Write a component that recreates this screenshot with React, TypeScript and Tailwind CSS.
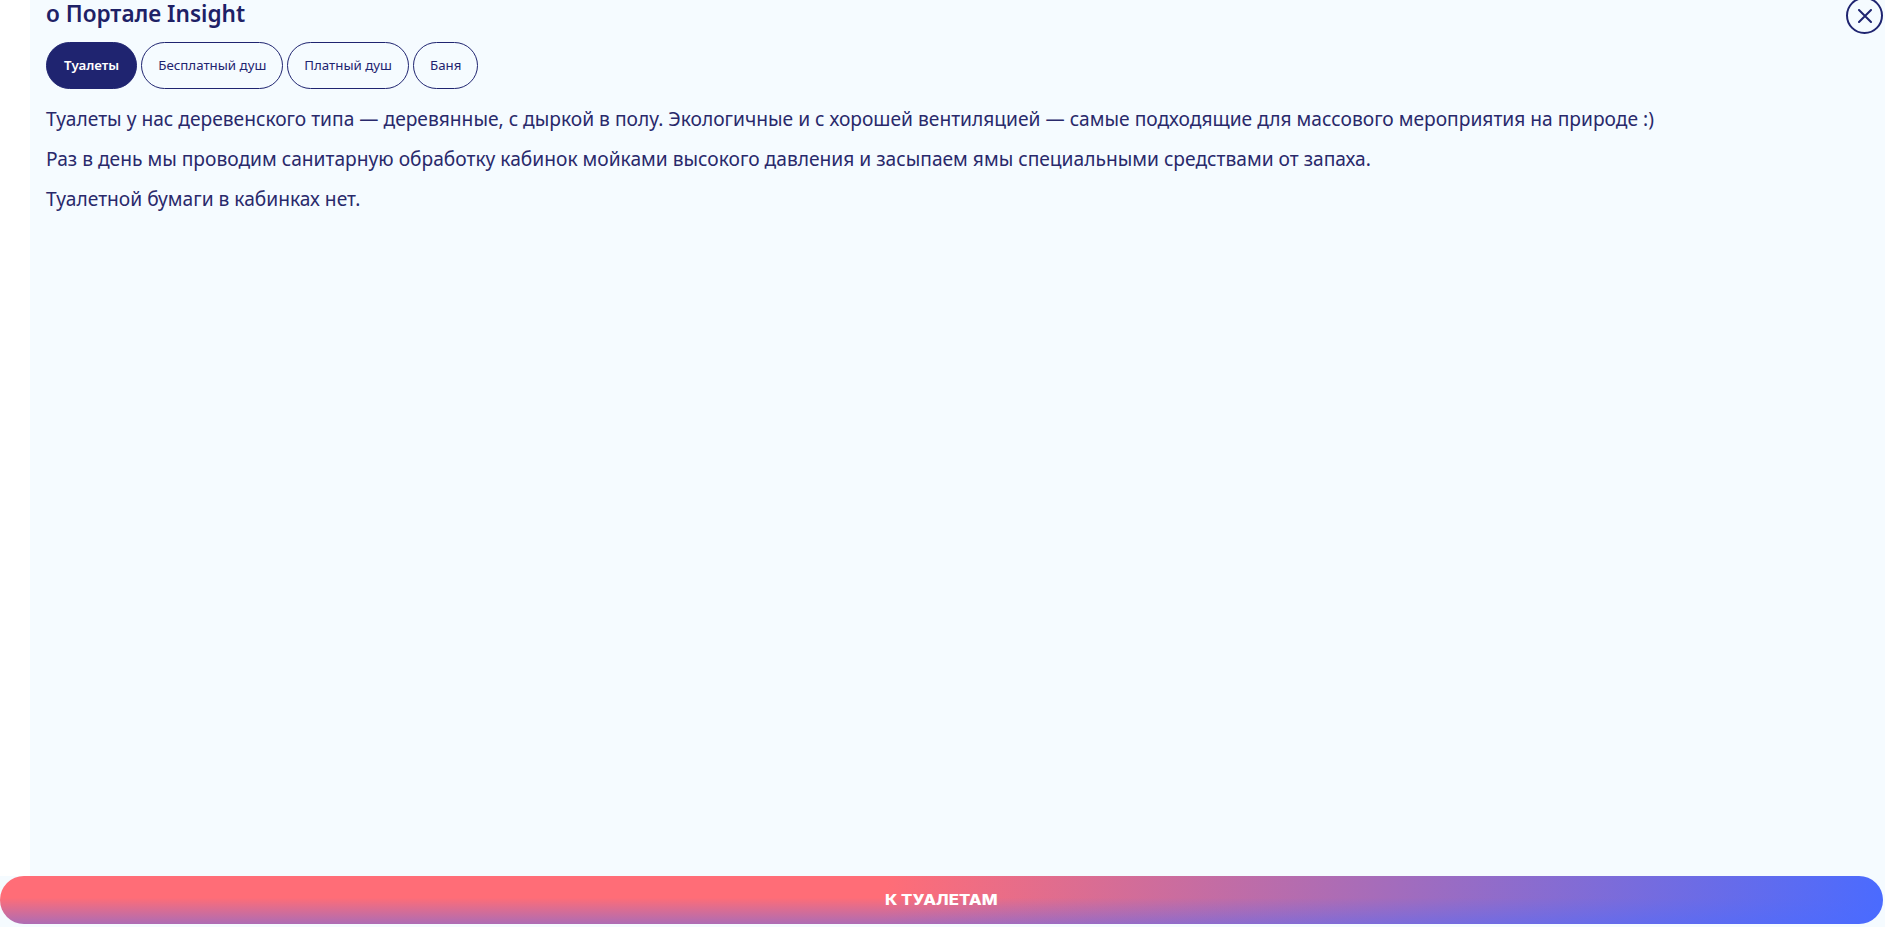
import React from "react";

const tabs = ["Туалеты", "Бесплатный душ", "Платный душ", "Баня"];

export default function App() {
  return (
    <div
      className="flex h-screen w-full flex-col bg-[#f5fbff]"
      style={{ fontFamily: '"Noto Sans", "Open Sans", sans-serif' }}
    >
      <div className="flex min-h-0 flex-1">
        <div className="w-[30px] shrink-0 bg-white" />
        <div className="relative flex-1 px-[16px]">
          <h1 className="text-[22.6px] font-semibold leading-[28px] text-[#1e2166]">
            о Портале Insight
          </h1>
          <div className="mt-[14px] flex gap-[4px]">
            {tabs.map((t, i) => (
              <button
                key={t}
                className={
                  i === 0
                    ? "h-[47px] rounded-full border border-[#1f2470] bg-[#1f2470] px-[17px] text-[13.3px] font-semibold text-white"
                    : "h-[47px] rounded-full border border-[#1f2470] bg-transparent px-[16px] text-[13.3px] text-[#1f2470]"
                }
              >
                {t}
              </button>
            ))}
          </div>
          <div className="mt-[15px] flex flex-col gap-[11px] text-[19.2px] leading-[29px] text-[#29296b]">
            <p>
              Туалеты у нас деревенского типа — деревянные, с дыркой в полу. Экологичные и с хорошей вентиляцией — самые подходящие для массового мероприятия на природе :)
            </p>
            <p>
              Раз в день мы проводим санитарную обработку кабинок мойками высокого давления и засыпаем ямы специальными средствами от запаха.
            </p>
            <p>Туалетной бумаги в кабинках нет.</p>
          </div>
          <button
            aria-label="Закрыть"
            className="absolute right-[2px] top-[-3px] flex h-[37px] w-[37px] items-center justify-center rounded-full border-2 border-[#1f2470] text-[#1f2470]"
          >
            <svg width="14" height="14" viewBox="0 0 14 14" fill="none">
              <path d="M1 1L13 13M13 1L1 13" stroke="currentColor" strokeWidth="2" strokeLinecap="round" />
            </svg>
          </button>
        </div>
      </div>
      <div className="mb-[3px] mr-[2px] h-[48px] shrink-0">
        <button
          className="flex h-full w-full items-center justify-center rounded-full bg-[linear-gradient(to_bottom,rgba(74,107,255,0)_45%,rgba(74,107,255,0.45)_100%),linear-gradient(95deg,#ff6d77_47%,#4a6bff_100%)] text-[15px] font-extrabold uppercase text-white"
          style={{ fontFamily: 'Inter, "Noto Sans", sans-serif' }}
        >
          <span className="inline-block scale-x-[1.12]">К туалетам</span>
        </button>
      </div>
    </div>
  );
}
